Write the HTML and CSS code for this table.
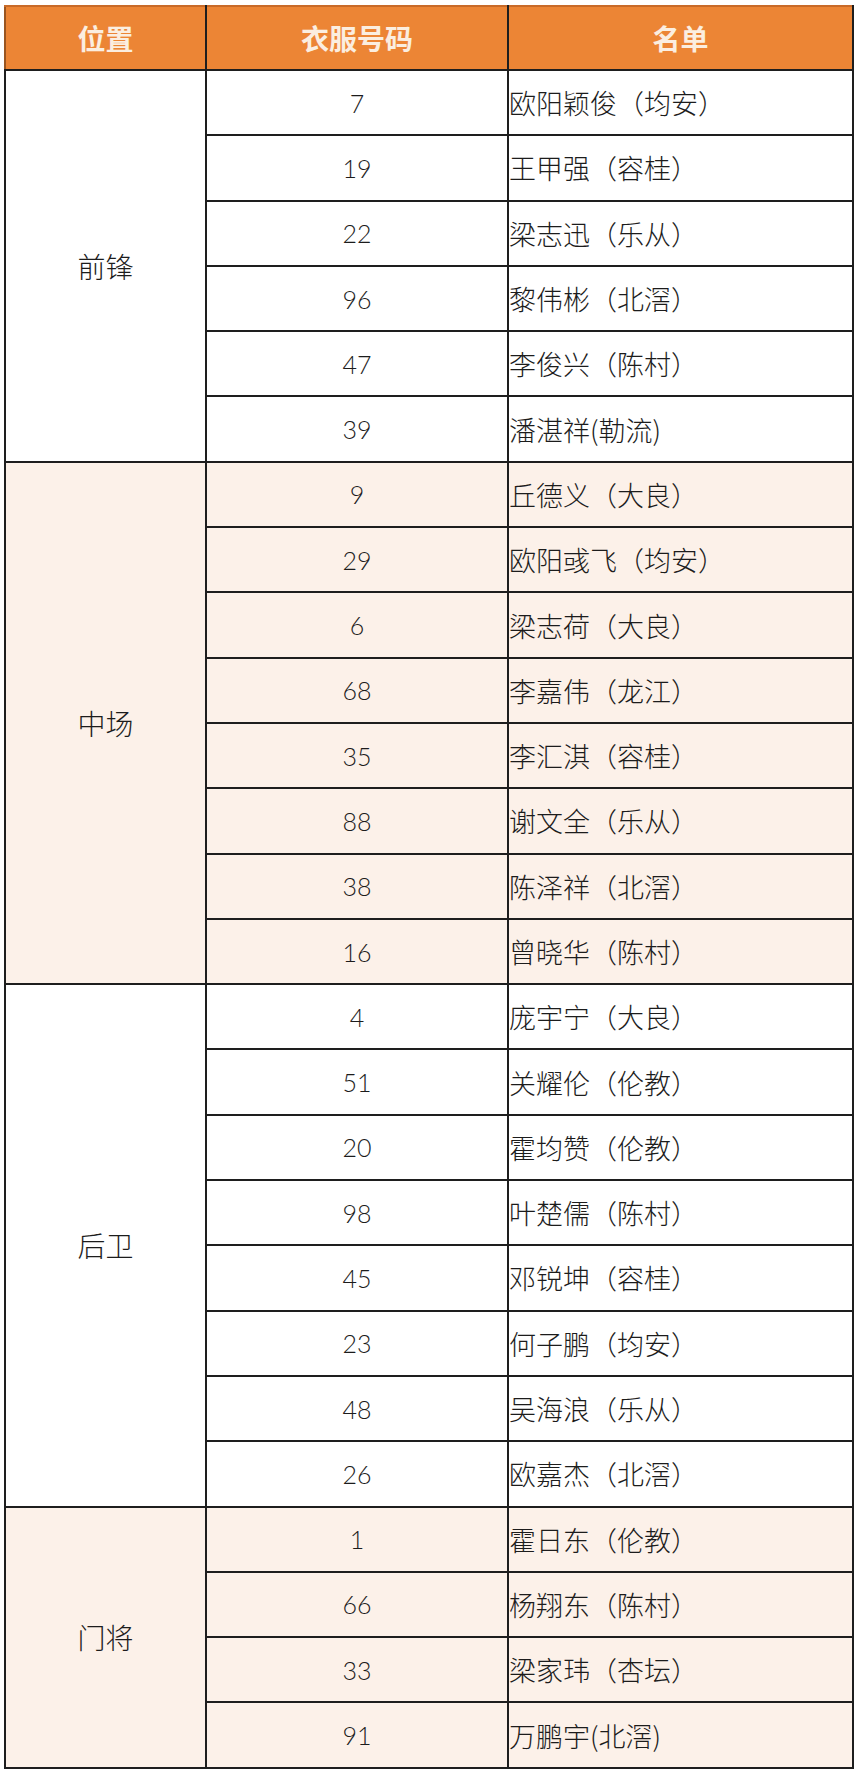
FILE: index.html
```html
<!DOCTYPE html>
<html lang="zh-CN">
<head>
<meta charset="utf-8">
<title>名单</title>
<link rel="stylesheet" href="styles.css">
</head>
<body>
<div class="sheet">
<table class="roster">
  <colgroup>
    <col class="c-pos">
    <col class="c-num">
    <col class="c-name">
  </colgroup>
  <thead>
    <tr class="head"><th>位置</th><th>衣服号码</th><th>名单</th></tr>
  </thead>
  <tbody class="grp">
    <tr><td class="pos" rowspan="6">前锋</td><td class="num">7</td><td class="name">欧阳颖俊（均安）</td></tr>
    <tr><td class="num">19</td><td class="name">王甲强（容桂）</td></tr>
    <tr><td class="num">22</td><td class="name">梁志迅（乐从）</td></tr>
    <tr><td class="num">96</td><td class="name">黎伟彬（北滘）</td></tr>
    <tr><td class="num">47</td><td class="name">李俊兴（陈村）</td></tr>
    <tr><td class="num">39</td><td class="name">潘湛祥(勒流)</td></tr>
  </tbody>
  <tbody class="grp tint">
    <tr><td class="pos" rowspan="8">中场</td><td class="num">9</td><td class="name">丘德义（大良）</td></tr>
    <tr><td class="num">29</td><td class="name">欧阳彧飞（均安）</td></tr>
    <tr><td class="num">6</td><td class="name">梁志荷（大良）</td></tr>
    <tr><td class="num">68</td><td class="name">李嘉伟（龙江）</td></tr>
    <tr><td class="num">35</td><td class="name">李汇淇（容桂）</td></tr>
    <tr><td class="num">88</td><td class="name">谢文全（乐从）</td></tr>
    <tr><td class="num">38</td><td class="name">陈泽祥（北滘）</td></tr>
    <tr><td class="num">16</td><td class="name">曾晓华（陈村）</td></tr>
  </tbody>
  <tbody class="grp">
    <tr><td class="pos" rowspan="8">后卫</td><td class="num">4</td><td class="name">庞宇宁（大良）</td></tr>
    <tr><td class="num">51</td><td class="name">关耀伦（伦教）</td></tr>
    <tr><td class="num">20</td><td class="name">霍均赞（伦教）</td></tr>
    <tr><td class="num">98</td><td class="name">叶楚儒（陈村）</td></tr>
    <tr><td class="num">45</td><td class="name">邓锐坤（容桂）</td></tr>
    <tr><td class="num">23</td><td class="name">何子鹏（均安）</td></tr>
    <tr><td class="num">48</td><td class="name">吴海浪（乐从）</td></tr>
    <tr><td class="num">26</td><td class="name">欧嘉杰（北滘）</td></tr>
  </tbody>
  <tbody class="grp tint">
    <tr><td class="pos" rowspan="4">门将</td><td class="num">1</td><td class="name">霍日东（伦教）</td></tr>
    <tr><td class="num">66</td><td class="name">杨翔东（陈村）</td></tr>
    <tr><td class="num">33</td><td class="name">梁家玮（杏坛）</td></tr>
    <tr><td class="num">91</td><td class="name">万鹏宇(北滘)</td></tr>
  </tbody>
</table>
</div>
</body>
</html>
```
FILE: styles.css
```css
html, body {
  margin: 0;
  padding: 0;
  background: #ffffff;
}
.sheet {
  padding: 5px 0 0 4px;
  width: 859px;
  box-sizing: border-box;
}
.roster {
  border-collapse: collapse;
  table-layout: fixed;
  width: 848px;
  font-family: "Noto Sans CJK SC", "Noto Sans", sans-serif;
  color: #1c1c1c;
}
.c-pos { width: 201px; }
.c-num { width: 302px; }
.c-name { width: 345px; }
.roster th,
.roster td {
  border: 2px solid #1e1e1e;
  padding: 0;
}
.head th {
  height: 62px;
  background: #ec8535;
  color: #fbeee0;
  font-size: 28px;
  font-weight: 700;
  text-align: center;
  vertical-align: middle;
  border-top-color: #c86a28;
  border-left-color: #9a5520;
}
.roster tbody tr {
  height: 65.3px;
}
.tint td {
  background: #fcf1e9;
}
.pos {
  text-align: center;
  vertical-align: middle;
  font-size: 28px;
  font-weight: 300;
  padding-bottom: 10px;
  border-left-color: #555555;
}
.num {
  text-align: center;
  vertical-align: middle;
  font-family: "Lato", "Noto Sans", sans-serif;
  font-size: 25px;
  font-weight: 300;
  padding-bottom: 4px;
}
.name {
  text-align: left;
  vertical-align: middle;
  font-size: 27px;
  font-weight: 300;
  padding-left: 5px;
  padding-bottom: 6px;
  white-space: nowrap;
}
```
